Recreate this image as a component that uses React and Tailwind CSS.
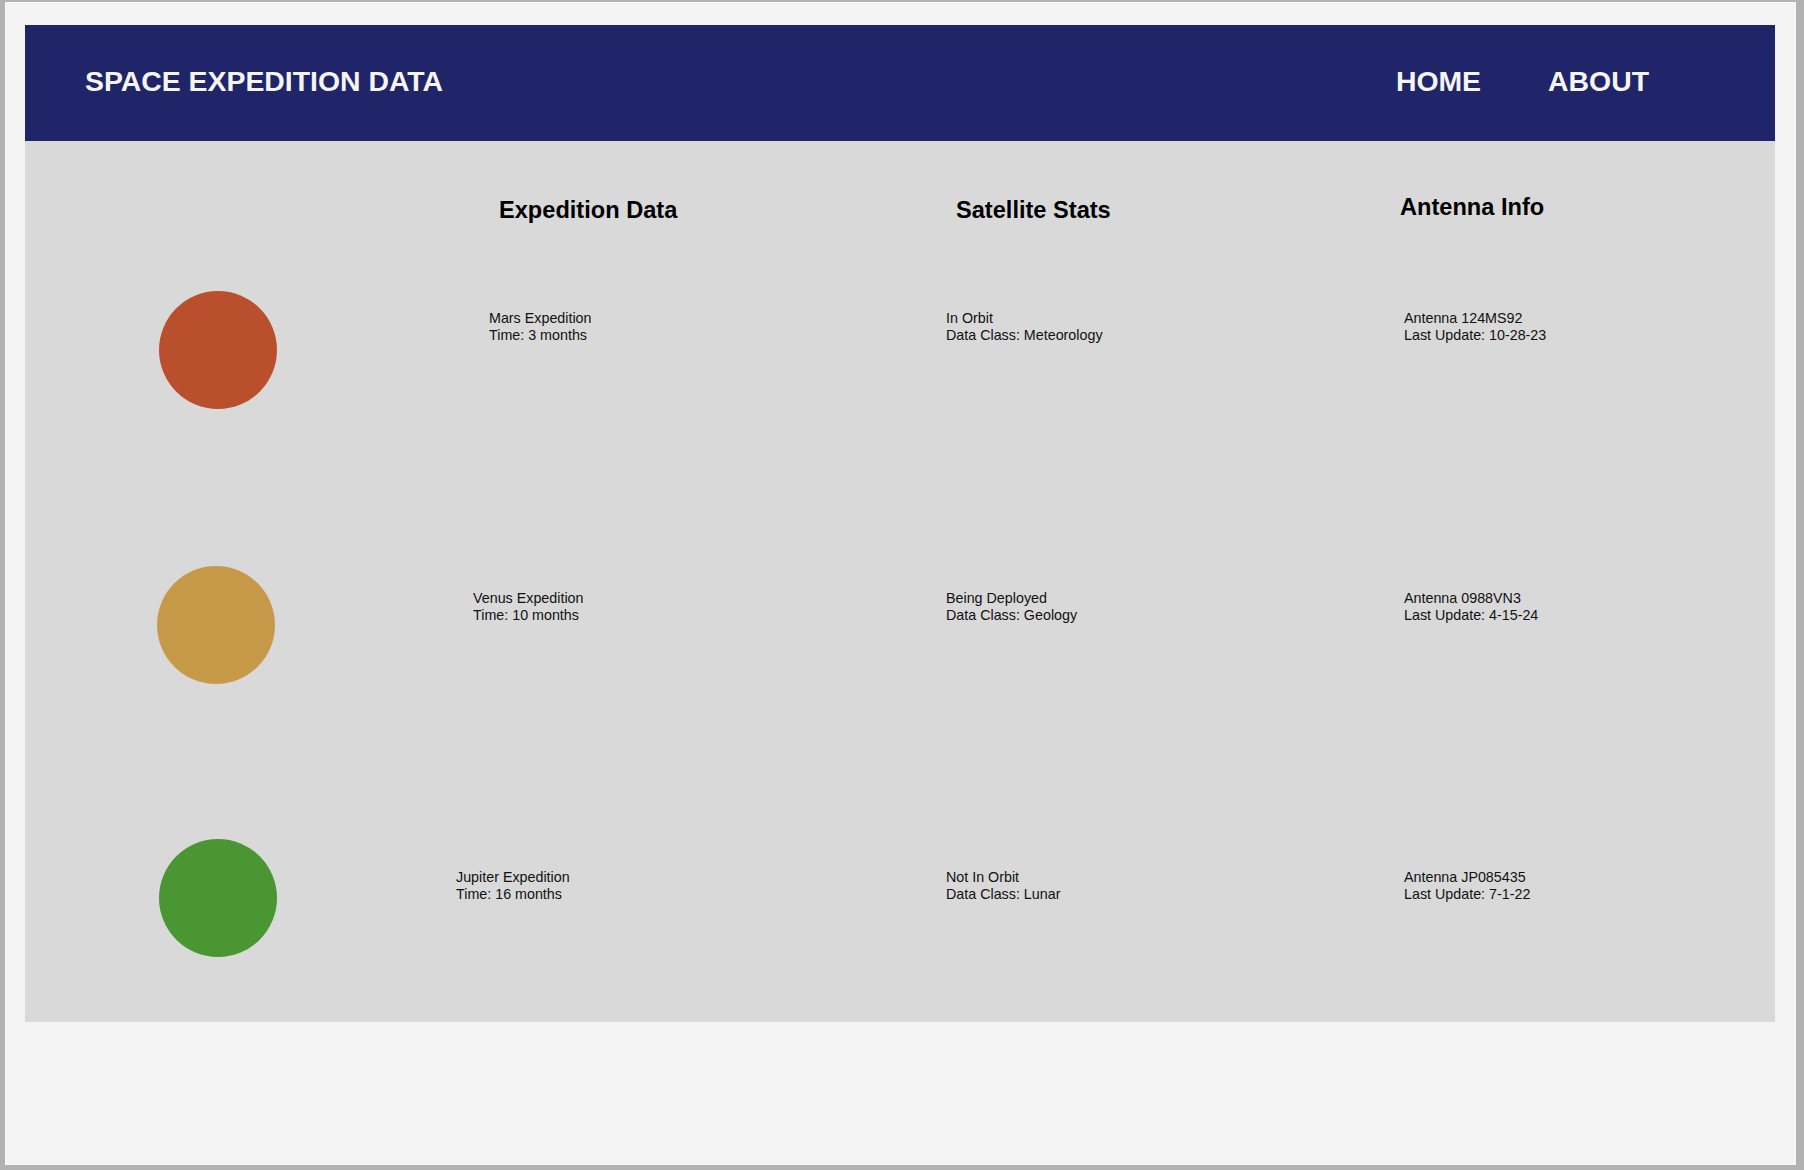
import React from "react";

const rows = [
  {
    color: "bg-[#b94f2c]",
    circleMl: "ml-[134px]",
    textMt: "mt-[19px]",
    h: "h-[275px]",
    expPl: "pl-[44px]",
    exp: ["Mars Expedition", "Time: 3 months"],
    sat: ["In Orbit", "Data Class: Meteorology"],
    ant: ["Antenna 124MS92", "Last Update: 10-28-23"],
  },
  {
    color: "bg-[#c79a49]",
    circleMl: "ml-[132px]",
    textMt: "mt-[24px]",
    h: "h-[273px]",
    expPl: "pl-[28px]",
    exp: ["Venus Expedition", "Time: 10 months"],
    sat: ["Being Deployed", "Data Class: Geology"],
    ant: ["Antenna 0988VN3", "Last Update: 4-15-24"],
  },
  {
    color: "bg-[#4a9632]",
    circleMl: "ml-[134px]",
    textMt: "mt-[30px]",
    h: "h-[183px]",
    expPl: "pl-[11px]",
    exp: ["Jupiter Expedition", "Time: 16 months"],
    sat: ["Not In Orbit", "Data Class: Lunar"],
    ant: ["Antenna JP085435", "Last Update: 7-1-22"],
  },
];

function Lines({ lines, className }) {
  return (
    <div className={"text-[14.3px] leading-[17px] text-[#111111] " + className}>
      {lines.map((l) => (
        <div key={l}>{l}</div>
      ))}
    </div>
  );
}

export default function App() {
  return (
    <div
      className="h-[1170px] w-full bg-[#b2b2b2] pt-[2px] pl-[5px] pr-[8px] pb-[5px] flex flex-col"
      style={{ fontFamily: '"Liberation Sans", Arial, sans-serif' }}
    >
      <div className="flex-1 bg-[#f4f4f4] border border-[#fafafa] pt-[22px] pl-[19px] pr-[20px]">
        <div className="flex flex-col">
          <header className="h-[116px] bg-[#202468] flex items-center justify-between pl-[60px] pr-[126px] pb-[4px]">
            <div className="text-[28.4px] font-bold text-[#f5f5f5] leading-[32px]">
              SPACE EXPEDITION DATA
            </div>
            <nav className="flex gap-[67px] text-[28.4px] font-bold text-[#f5f5f5] leading-[32px]">
              <span>HOME</span>
              <span>ABOUT</span>
            </nav>
          </header>
          <main className="bg-[#d9d9d9] h-[881px] flex flex-col">
            <div className="grid grid-cols-[420px_460px_458px_1fr] h-[150px] items-start text-[23.6px] leading-[28px] font-bold text-black">
              <div />
              <div className="pl-[54px] pt-[55px]">Expedition Data</div>
              <div className="pl-[51px] pt-[55px]">Satellite Stats</div>
              <div className="pl-[37px] pt-[52px]">Antenna Info</div>
            </div>
            {rows.map((r) => (
              <div
                key={r.exp[0]}
                className={"grid grid-cols-[420px_460px_458px_1fr] items-start " + r.h}
              >
                <div className={"w-[118px] h-[118px] rounded-full " + r.color + " " + r.circleMl} />
                <Lines lines={r.exp} className={r.expPl + " " + r.textMt} />
                <Lines lines={r.sat} className={"pl-[41px] " + r.textMt} />
                <Lines lines={r.ant} className={"pl-[41px] " + r.textMt} />
              </div>
            ))}
          </main>
        </div>
      </div>
    </div>
  );
}
